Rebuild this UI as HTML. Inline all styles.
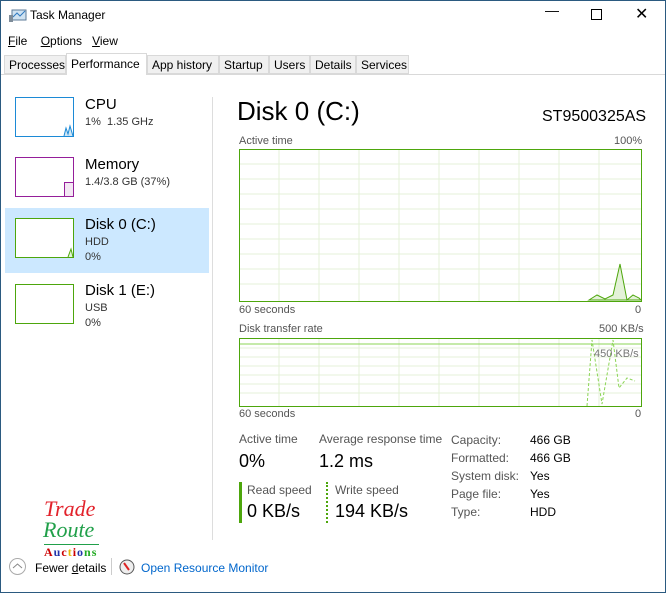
<html><head><style>
body{margin:0;width:666px;height:593px;background:#fff;font-family:"Liberation Sans",sans-serif;position:relative;overflow:hidden;color:#000}
.a{position:absolute;white-space:nowrap}
.fr{position:absolute;left:0;top:0;width:664px;height:591px;border:1px solid #2b5a80;border-top:1px solid #2b5a80}
.tab{position:absolute;top:55px;height:19px;font-size:12px;line-height:19px;padding:0 4px;background:#f0f0f0;border:1px solid #d9d9d9;box-sizing:border-box}
.th{position:absolute;left:15px;width:59px;height:40px;box-sizing:border-box;background:#fff}
.s{font-size:11px;color:#555}
</style></head><body>
<div class="fr"></div>
<svg class="a" style="left:9px;top:8px" width="18" height="16"><rect x="3" y="2" width="14" height="10" fill="#cfe2f1" stroke="#5b7a97"/><polyline points="4,9 8,5 11,8 16,3" fill="none" stroke="#2f7ac0"/><rect x="0" y="7" width="4" height="7" fill="#7e8c99"/></svg>
<div class="a" style="left:30px;top:8px;font-size:12px">Task Manager</div>
<div class="a" style="left:545px;top:2px;font-size:14px">&#8212;</div>
<div class="a" style="left:591px;top:9px;width:9px;height:9px;border:1px solid #000"></div>
<div class="a" style="left:635px;top:4px;font-size:16px">✕</div>
<div class="a" style="left:8px;top:34px;font-size:12px"><u>F</u>ile &nbsp;&nbsp;&nbsp;<u>O</u>ptions &nbsp;&nbsp;<u>V</u>iew</div>
<div class="a" style="left:1px;top:74px;width:664px;border-top:1px solid #d9d9d9"></div>
<div class="tab" style="left:4px;width:62px">Processes</div>
<div class="tab" style="left:66px;top:53px;height:22px;background:#fff;border-bottom:none;width:81px;line-height:20px">Performance</div>
<div class="tab" style="left:147px;width:72px">App history</div>
<div class="tab" style="left:219px;width:50px">Startup</div>
<div class="tab" style="left:269px;width:41px">Users</div>
<div class="tab" style="left:310px;width:46px">Details</div>
<div class="tab" style="left:356px;width:53px">Services</div>

<div class="th" style="top:97px;border:1px solid #1c8ad6"><svg width="57" height="38" style="position:absolute;left:0;top:0"><polyline points="48,38 50,30 52,36 54,28 57,38" fill="#cfe6f6" stroke="#1c8ad6"/></svg></div>
<div class="a" style="left:85px;top:96px;font-size:15px">CPU</div>
<div class="a s" style="left:85px;top:116px;color:#333">1% &nbsp;1.35 GHz</div>
<div class="th" style="top:157px;border:1px solid #951e9a"><div style="position:absolute;right:0;bottom:0;width:8px;height:13px;border:1px solid #951e9a;border-right:none;border-bottom:none;background:#f3e7f3"></div></div>
<div class="a" style="left:85px;top:156px;font-size:15px">Memory</div>
<div class="a s" style="left:85px;top:176px;color:#333">1.4/3.8 GB (37%)</div>
<div class="a" style="left:5px;top:208px;width:204px;height:65px;background:#cce8ff"></div>
<div class="th" style="top:218px;border:1px solid #4da60c"><svg width="57" height="38" style="position:absolute"><polyline points="52,38 55,30 57,38" fill="#e4f2d8" stroke="#4da60c"/></svg></div>
<div class="a" style="left:85px;top:216px;font-size:15px">Disk 0 (C:)</div>
<div class="a s" style="left:85px;top:236px;color:#333">HDD</div>
<div class="a s" style="left:85px;top:251px;color:#333">0%</div>
<div class="th" style="top:284px;border:1px solid #4da60c"></div>
<div class="a" style="left:85px;top:282px;font-size:15px">Disk 1 (E:)</div>
<div class="a s" style="left:85px;top:302px;color:#333">USB</div>
<div class="a s" style="left:85px;top:317px;color:#333">0%</div>
<div class="a" style="left:212px;top:97px;height:443px;border-left:1px solid #ddd"></div>

<div class="a" style="left:237px;top:96px;font-size:26px">Disk 0 (C:)</div>
<div class="a" style="left:542px;top:108px;font-size:16px">ST9500325AS</div>
<div class="a s" style="left:239px;top:135px">Active time</div>
<div class="a s" style="left:614px;top:135px">100%</div>
<svg class="a" style="left:239px;top:149px" width="403" height="153">
<g stroke="#e4f2d8"><path d="M40 0V153M80 0V153M120 0V153M160 0V153M200 0V153M240 0V153M280 0V153M320 0V153M360 0V153M0 15H403M0 30H403M0 45H403M0 60H403M0 75H403M0 90H403M0 105H403M0 120H403M0 135H403"/></g>
<polygon points="350,151 358,146 366,150 374,146 381,115 388,151 394,146 400,149 402,151" fill="#e4f2d8" stroke="#4da60c"/>
<rect x="0.5" y="0.5" width="402" height="152" fill="none" stroke="#4da60c"/></svg>
<div class="a s" style="left:239px;top:304px">60 seconds</div>
<div class="a s" style="left:635px;top:304px">0</div>
<div class="a s" style="left:239px;top:323px">Disk transfer rate</div>
<div class="a s" style="left:599px;top:323px">500 KB/s</div>
<svg class="a" style="left:239px;top:338px" width="403" height="69">
<g stroke="#e4f2d8"><path d="M40 0V69M80 0V69M120 0V69M160 0V69M200 0V69M240 0V69M280 0V69M320 0V69M360 0V69M0 10H403M0 19H403M0 28H403M0 37H403M0 46H403M0 55H403"/></g>
<line x1="0" y1="6" x2="403" y2="6" stroke="#8bd455"/>
<polyline points="348,68 353,2 363,66 374,2 380,50 388,40 396,43" fill="none" stroke="#8bd455" stroke-dasharray="3,2"/>
<rect x="0.5" y="0.5" width="402" height="68" fill="none" stroke="#4da60c"/></svg>
<div class="a s" style="left:594px;top:348px;color:#777">450 KB/s</div>
<div class="a s" style="left:239px;top:408px">60 seconds</div>
<div class="a s" style="left:635px;top:408px">0</div>

<div class="a s" style="left:239px;top:432px;font-size:12px">Active time</div>
<div class="a" style="left:239px;top:451px;font-size:18px">0%</div>
<div class="a s" style="left:319px;top:432px;font-size:12px">Average response time</div>
<div class="a" style="left:319px;top:451px;font-size:18px">1.2 ms</div>
<div class="a" style="left:239px;top:482px;height:41px;border-left:3px solid #4da60c"></div>
<div class="a s" style="left:247px;top:483px;font-size:12px">Read speed</div>
<div class="a" style="left:247px;top:501px;font-size:18px">0 KB/s</div>
<div class="a" style="left:326px;top:482px;height:41px;border-left:2px dotted #4da60c"></div>
<div class="a s" style="left:335px;top:483px;font-size:12px">Write speed</div>
<div class="a" style="left:335px;top:501px;font-size:18px">194 KB/s</div>
<div class="a s" style="left:451px;top:431px;font-size:12px;line-height:18px">Capacity:<br>Formatted:<br>System disk:<br>Page file:<br>Type:</div>
<div class="a" style="left:530px;top:431px;font-size:12px;line-height:18px">466 GB<br>466 GB<br>Yes<br>Yes<br>HDD</div>

<div class="a" style="left:44px;top:498px;font-family:'Liberation Serif',serif;font-style:italic;font-size:22px;color:#e2222b;line-height:22px">Trade</div>
<div class="a" style="left:43px;top:519px;font-family:'Liberation Serif',serif;font-style:italic;font-size:22px;color:#21a04a;line-height:22px">Route</div>
<div class="a" style="left:44px;top:544px;width:55px;border-top:1px solid #21a04a"></div>
<div class="a" style="left:44px;top:545px;font-family:'Liberation Serif',serif;font-weight:bold;font-size:12px;letter-spacing:1px"><span style="color:#c00">A</span><span style="color:#23a">u</span><span style="color:#c00">c</span><span style="color:#e6b800">t</span><span style="color:#c00">i</span><span style="color:#23a">o</span><span style="color:#2a2">n</span><span style="color:#2a2">s</span></div>
<div class="a" style="left:9px;top:558px;width:17px;height:17px;border:1px solid #aaa;border-radius:50%;box-sizing:border-box"></div>
<svg class="a" style="left:12px;top:562px" width="11" height="8"><polyline points="1,6 5.5,2 10,6" fill="none" stroke="#888"/></svg>
<div class="a" style="left:35px;top:561px;font-size:12px">Fewer <u>d</u>etails</div>
<div class="a" style="left:111px;top:558px;height:17px;border-left:1px solid #ccc"></div>
<svg class="a" style="left:119px;top:559px" width="16" height="16"><circle cx="8" cy="8" r="7" fill="#eee" stroke="#555"/><line x1="5" y1="4" x2="10" y2="11" stroke="#d22" stroke-width="2"/></svg>
<div class="a" style="left:141px;top:561px;font-size:12px;color:#0066cc">Open Resource Monitor</div>
</body></html>
